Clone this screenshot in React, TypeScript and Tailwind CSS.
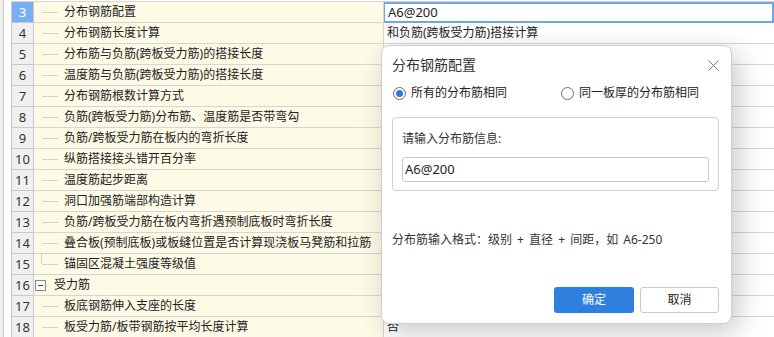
import React from 'react';

type Row = {
  no: number;
  name: string;
  value?: string;
  kind?: 'leaf' | 'last' | 'group';
};

const rows: Row[] = [
  { no: 3, name: '分布钢筋配置', value: 'A6@200' },
  { no: 4, name: '分布钢筋长度计算', value: '和负筋(跨板受力筋)搭接计算' },
  { no: 5, name: '分布筋与负筋(跨板受力筋)的搭接长度' },
  { no: 6, name: '温度筋与负筋(跨板受力筋)的搭接长度' },
  { no: 7, name: '分布钢筋根数计算方式' },
  { no: 8, name: '负筋(跨板受力筋)分布筋、温度筋是否带弯勾' },
  { no: 9, name: '负筋/跨板受力筋在板内的弯折长度' },
  { no: 10, name: '纵筋搭接接头错开百分率' },
  { no: 11, name: '温度筋起步距离' },
  { no: 12, name: '洞口加强筋端部构造计算' },
  { no: 13, name: '负筋/跨板受力筋在板内弯折遇预制底板时弯折长度' },
  { no: 14, name: '叠合板(预制底板)或板缝位置是否计算现浇板马凳筋和拉筋' },
  { no: 15, name: '锚固区混凝土强度等级值', kind: 'last' },
  { no: 16, name: '受力筋', kind: 'group' },
  { no: 17, name: '板底钢筋伸入支座的长度' },
  { no: 18, name: '板受力筋/板带钢筋按平均长度计算', value: '否' },
];

const font = { fontFamily: "'Noto Sans', 'Noto Sans CJK SC', sans-serif" };

function GridRow({ row }: { row: Row }) {
  const selected = row.no === 3;
  return (
    <div className="flex h-[21px]">
      <div className="w-[4px] shrink-0 bg-[#f0f0f0] border-r border-[#c9c9c9]" />
      <div className="w-[7px] shrink-0 bg-white" />
      <div
        className={
          selected
            ? 'w-[23px] shrink-0 border-x border-b border-[#c9c9c9] bg-[#7aaef3] text-white text-[13px] leading-[20px] text-center'
            : 'w-[23px] shrink-0 border-x border-b border-[#c9c9c9] bg-[#f0f0f0] text-[#333] text-[13px] leading-[20px] text-center'
        }
      >
        {row.no}
      </div>
      <div className="relative w-[350px] shrink-0 border-r border-b border-[#d6d6d6] bg-[#fdfbe6] text-[12px] leading-[20px] text-[#222] whitespace-nowrap overflow-hidden">
        {row.kind === 'group' ? (
          <div className="flex items-center h-full">
            <div className="ml-[1px] w-[11px] h-[11px] border border-[#888] bg-white flex items-center justify-center">
              <div className="w-[5px] h-px bg-[#444]" />
            </div>
            <span className="ml-[8px]">{row.name}</span>
          </div>
        ) : (
          <div className="flex items-center h-full">
            <div className="relative w-[30px] h-full shrink-0">
              {row.kind === 'last' && (
                <div className="absolute left-[7px] top-0 h-[10px] w-px bg-[#cfcfcf]" />
              )}
              <div className="absolute left-[8px] top-[10px] h-px w-[16px] bg-[#d2d2d2]" />
            </div>
            <span>{row.name}</span>
          </div>
        )}
      </div>
      {selected ? (
        <div className="flex-1 -ml-px border-2 border-[#6ea6ea] bg-white pl-[3px] text-[13px] leading-[17px] text-[#222]">
          {row.value}
        </div>
      ) : (
        <div className="flex-1 border-b border-[#d6d6d6] bg-white pl-[3px] text-[12px] leading-[20px] text-[#222] whitespace-nowrap overflow-hidden">
          {row.value}
        </div>
      )}
    </div>
  );
}

function Radio({ checked, label }: { checked?: boolean; label: string }) {
  return (
    <div className="flex items-center">
      <div className="w-[13px] h-[13px] rounded-full border border-[#6b6b6b] bg-white flex items-center justify-center">
        {checked && <div className="w-[7px] h-[7px] rounded-full bg-[#2a7ae0]" />}
      </div>
      <span className="ml-[5px] text-[12px] leading-[20px] text-[#222]">{label}</span>
    </div>
  );
}

export default function App() {
  return (
    <div className="relative w-[774px] h-[337px] overflow-hidden bg-white" style={font}>
      <div className="flex h-[2px]">
        <div className="w-[4px] shrink-0 bg-[#f0f0f0] border-r border-[#c9c9c9]" />
        <div className="w-[7px] shrink-0" />
        <div className="flex-1 border-b border-[#d6d6d6]" />
      </div>
      {rows.map((r) => (
        <GridRow key={r.no} row={r} />
      ))}

      <div className="absolute left-[381px] top-[45px] w-[351px] h-[279px] rounded-[8px] border border-[#cfcfcf] bg-white px-[10px] pt-[9px] shadow-[6px_8px_28px_rgba(0,0,0,0.22)]">
        <div className="flex items-center justify-between h-[20px]">
          <span className="text-[14px] leading-[20px] text-[#333]">分布钢筋配置</span>
          <svg width="11" height="11" viewBox="0 0 11 11" className="mr-[2px]">
            <path d="M0.5 0.5 L10.5 10.5 M10.5 0.5 L0.5 10.5" stroke="#777" strokeWidth="1" />
          </svg>
        </div>
        <div className="flex items-center h-[20px] mt-[8px] pl-[1px]">
          <div className="w-[168px]">
            <Radio checked label="所有的分布筋相同" />
          </div>
          <Radio label="同一板厚的分布筋相同" />
        </div>
        <div className="mt-[14px] mr-[2px] rounded-[4px] border border-[#d0d0d0] px-[9px] pt-[12px] pb-[8px]">
          <div className="text-[12px] leading-[18px] text-[#333]">请输入分布筋信息:</div>
          <div className="mt-[9px] h-[25px] rounded-[3px] border border-[#c8c8c8] pl-[2px] text-[13px] leading-[23px] text-[#222]">
            A6@200
          </div>
        </div>
        <div className="mt-[40px] text-[12px] leading-[18px] text-[#333] whitespace-nowrap [word-spacing:2px]">
          分布筋输入格式：级别 + 直径 + 间距，如 A6-250
        </div>
        <div className="mt-[38px] mr-[2px] flex justify-end gap-[6px]">
          <button className="w-[80px] h-[26px] rounded-[3px] bg-[#2d7fe0] text-white text-[12px] leading-[26px]">
            确定
          </button>
          <button className="w-[79px] h-[26px] rounded-[3px] border border-[#cacaca] bg-white text-[#222] text-[12px] leading-[24px]">
            取消
          </button>
        </div>
      </div>
    </div>
  );
}
